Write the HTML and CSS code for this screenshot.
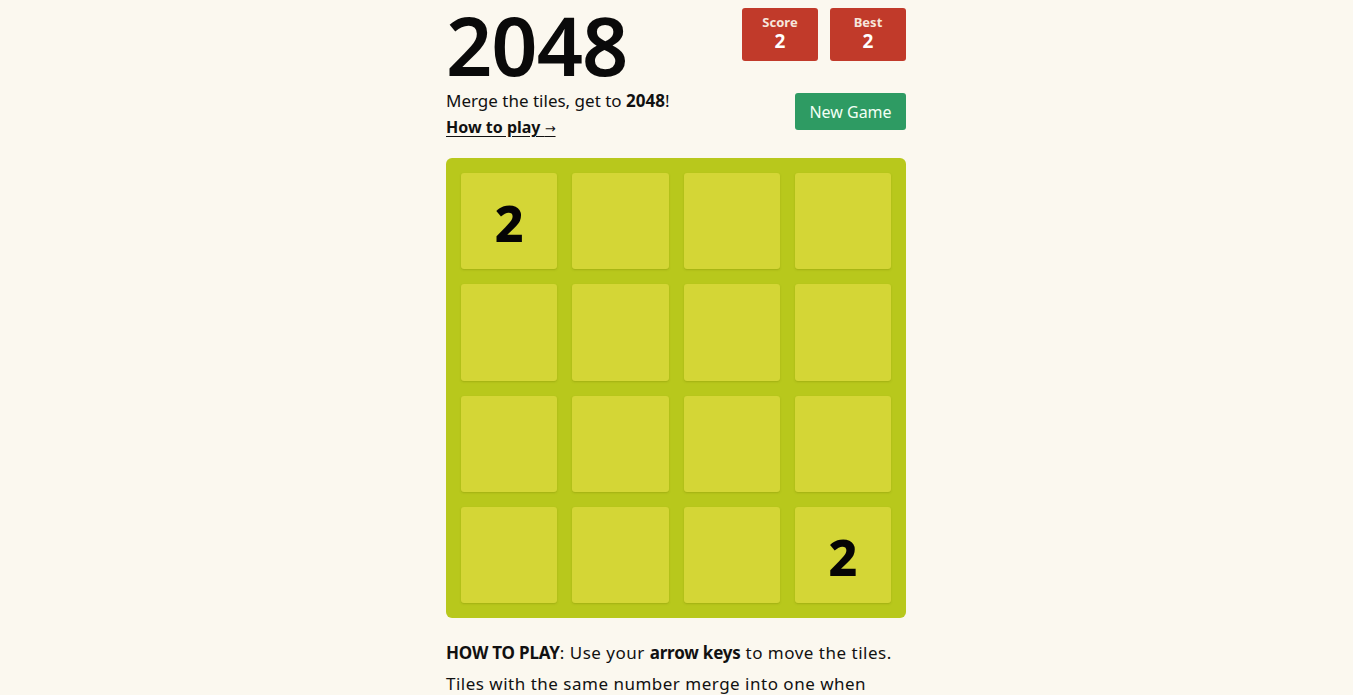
FILE: index.html
```html
<!DOCTYPE html>
<html>
<head>
<meta charset="utf-8">
<link rel="stylesheet" href="styles.css">
</head>
<body>
<div class="container">
  <div class="heading">
    <h1 class="title">2048</h1>
    <div class="scores">
      <div class="score-box"><span class="label">Score</span><span class="value">2</span></div>
      <div class="score-box"><span class="label">Best</span><span class="value">2</span></div>
    </div>
  </div>
  <div class="above-game">
    <div class="intro">
      <p class="intro-text">Merge the tiles, get to <strong>2048</strong>!</p>
      <a class="how-link" href="#">How to play <span class="arrow">→</span></a>
    </div>
    <a class="restart" href="#">New Game</a>
  </div>
  <div class="board">
    <div class="cell"><span class="num">2</span></div>
    <div class="cell"></div>
    <div class="cell"></div>
    <div class="cell"></div>
    <div class="cell"></div>
    <div class="cell"></div>
    <div class="cell"></div>
    <div class="cell"></div>
    <div class="cell"></div>
    <div class="cell"></div>
    <div class="cell"></div>
    <div class="cell"></div>
    <div class="cell"></div>
    <div class="cell"></div>
    <div class="cell"></div>
    <div class="cell"><span class="num">2</span></div>
  </div>
  <p class="explanation"><strong>HOW TO PLAY</strong>: Use your <strong>arrow keys</strong> to move the tiles. Tiles with the same number merge into one when they touch. Add them up to reach <strong>2048!</strong></p>
</div>
</body>
</html>
```
FILE: styles.css
```css
html, body {
  margin: 0;
  padding: 0;
}
body {
  background: #fbf8ef;
  color: #111;
  font-family: "Noto Sans", "DejaVu Sans", sans-serif;
  font-size: 18px;
  padding-right: 1px;
}
.container {
  width: 460px;
  margin: 0 auto;
}
.heading {
  display: flex;
  justify-content: space-between;
  align-items: flex-start;
  height: 88px;
}
.title {
  margin: 0;
  font-size: 81px;
  font-weight: 600;
  line-height: 96px;
  letter-spacing: -1px;
  color: #0a0a0a;
  margin-top: -3px;
}
.scores {
  display: flex;
  gap: 12px;
  padding-top: 8px;
}
.score-box {
  width: 76px;
  height: 53px;
  background: #c13a2a;
  border-radius: 3px;
  color: #fff;
  display: flex;
  flex-direction: column;
  align-items: center;
  box-sizing: border-box;
  padding-top: 6px;
}
.score-box .label {
  font-size: 13px;
  font-weight: 700;
  line-height: 16px;
  color: #f6e6dc;
}
.score-box .value {
  font-size: 19px;
  font-weight: 700;
  line-height: 22px;
}
.above-game {
  display: flex;
  justify-content: space-between;
  align-items: flex-start;
}
.intro-text {
  margin: 0;
  font-size: 17px;
  line-height: 26px;
}
.intro-text strong {
  font-weight: 700;
}
.how-link {
  display: block;
  width: max-content;
  color: #111;
  font-weight: 700;
  font-size: 16px;
  line-height: 26px;
  text-decoration: underline;
  text-underline-offset: 3px;
}
.how-link .arrow {
  font-weight: 400;
  font-size: 13px;
}
.restart {
  margin-top: 5px;
  width: 111px;
  height: 37px;
  background: #2e9b63;
  color: #f2fff5;
  border-radius: 3px;
  text-decoration: none;
  font-size: 16px;
  display: flex;
  align-items: center;
  justify-content: center;
}
.board {
  margin-top: 17px;
  width: 460px;
  height: 460px;
  box-sizing: border-box;
  padding: 15px;
  background: #b8c81c;
  border-radius: 6px;
  display: grid;
  grid-template-columns: repeat(4, 1fr);
  grid-template-rows: repeat(4, 1fr);
  gap: 15px;
}
.cell {
  background: #d4d636;
  border-radius: 3px;
  box-shadow: 0 1px 2px rgba(120, 130, 0, 0.35);
  display: flex;
  align-items: center;
  justify-content: center;
}
.num {
  font-size: 50px;
  font-weight: 800;
  color: #050505;
  line-height: 1;
  margin-top: 4px;
}
.explanation {
  margin: 19px 0 0;
  font-size: 17px;
  line-height: 31px;
  letter-spacing: 0.5px;
}
.explanation strong {
  font-weight: 700;
  letter-spacing: -0.2px;
}
```
